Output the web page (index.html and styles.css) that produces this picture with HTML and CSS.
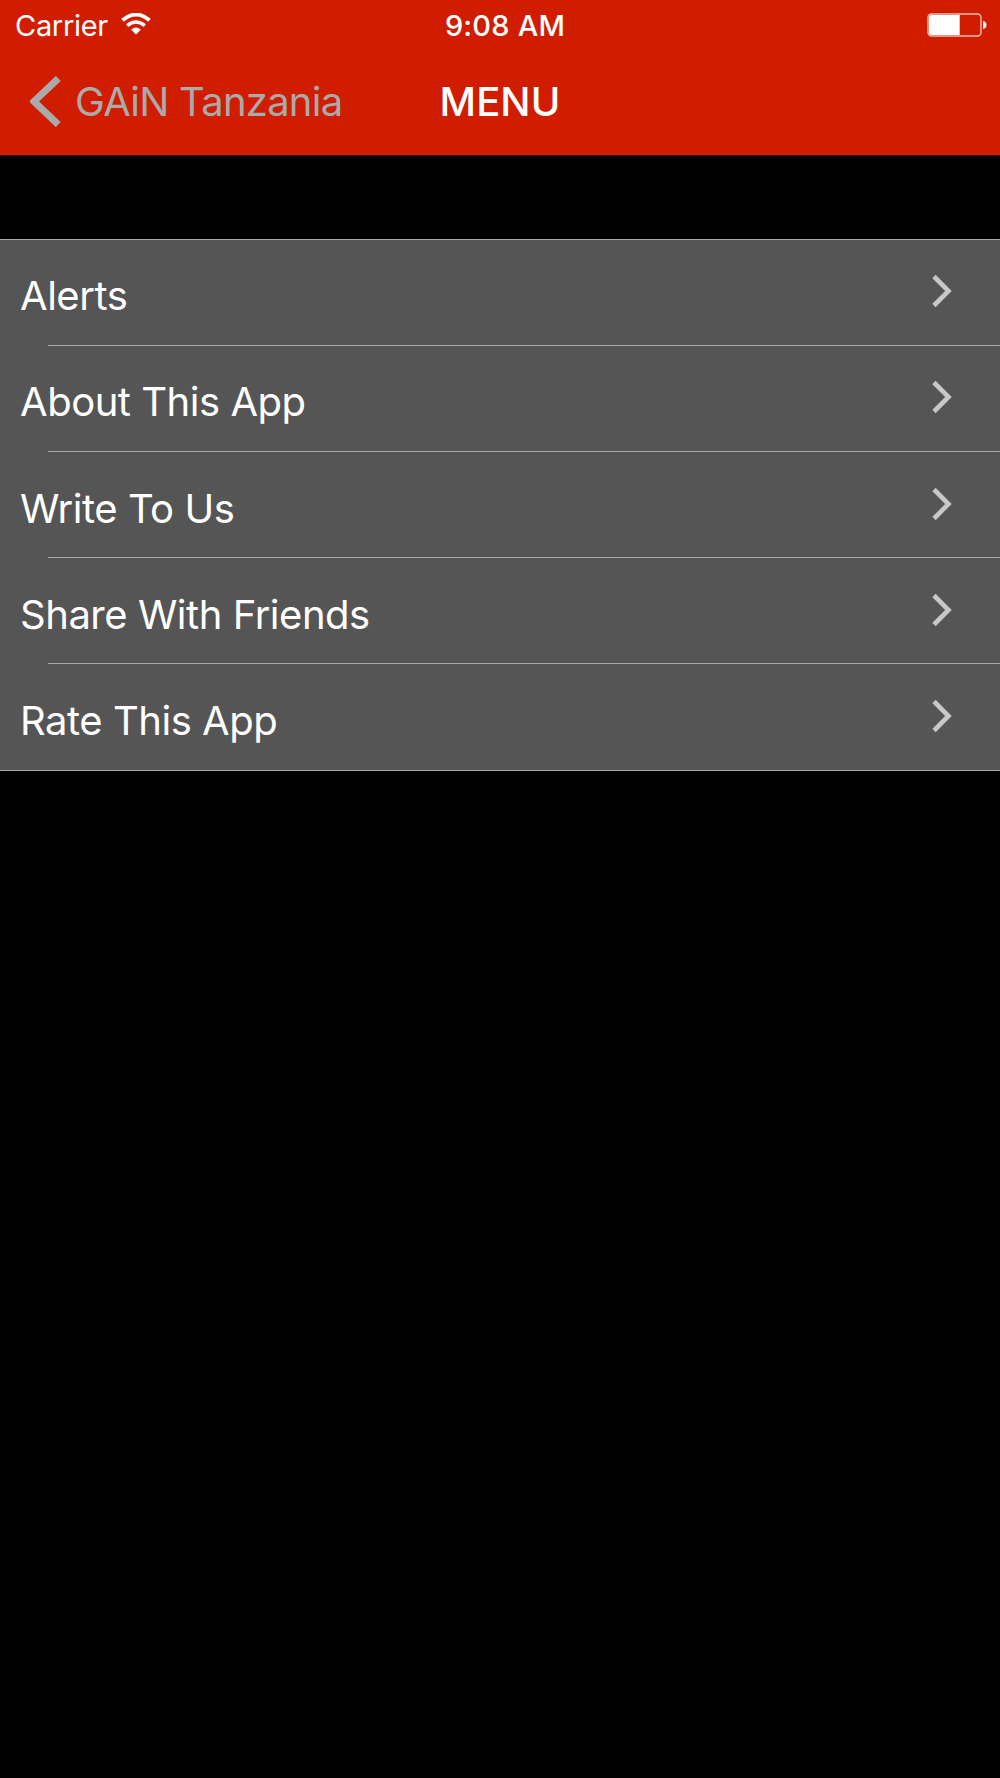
FILE: index.html
```html
<!DOCTYPE html>
<html lang="en">
<head>
<meta charset="utf-8">
<title>Menu</title>
<link rel="stylesheet" href="styles.css">
</head>
<body>
<header class="header">
  <div class="status">
    <div class="status-left">
      <span class="carrier">Carrier</span>
      <svg class="wifi" width="30" height="22" viewBox="0 0 30 22">
        <path d="M1.5 7.3Q15-4.3 28.500 7.300" fill="none" stroke="#fff" stroke-width="3.800"/>
        <path d="M6.200 12.700Q15 5.300 23.800 12.700" fill="none" stroke="#fff" stroke-width="3.500"/>
        <path d="M10.200 16.800Q15 12.200 19.800 16.800L15 21.600Z" fill="#fff"/>
      </svg>
    </div>
    <span class="time">9:08 AM</span>
    <svg class="battery" width="60" height="24" viewBox="0 0 60 24">
      <rect x="1" y="1" width="53" height="22" rx="3.500" fill="none" stroke="#fff" stroke-opacity=".7" stroke-width="1.400"/>
      <path d="M4.500 2H32.700V22H4.500Q2 22 2 19.500V4.500Q2 2 4.500 2Z" fill="#fff"/>
      <path d="M56 8Q59.500 8.800 59.500 12T56 16Z" fill="#fff"/>
    </svg>
  </div>
  <nav class="navbar">
    <a class="back">
      <svg class="back-icon" width="31" height="51" viewBox="0 0 31 51">
        <path d="M28.300 2.400L4 25.500L28.300 48.600" fill="none" stroke="#aaa" stroke-width="7"/>
      </svg>
      <span class="back-label">GAiN Tanzania</span>
    </a>
    <h1 class="title">MENU</h1>
  </nav>
</header>
<main class="menu">
  <a class="row"><span class="label">Alerts</span><svg class="chevron" width="20" height="34" viewBox="0 0 20 34"><path d="M2 2.500L16.500 17L2 31.500" /></svg></a>
  <a class="row"><span class="label">About This App</span><svg class="chevron" width="20" height="34" viewBox="0 0 20 34"><path d="M2 2.500L16.500 17L2 31.500" /></svg></a>
  <a class="row"><span class="label">Write To Us</span><svg class="chevron" width="20" height="34" viewBox="0 0 20 34"><path d="M2 2.500L16.500 17L2 31.500" /></svg></a>
  <a class="row"><span class="label">Share With Friends</span><svg class="chevron" width="20" height="34" viewBox="0 0 20 34"><path d="M2 2.500L16.500 17L2 31.500" /></svg></a>
  <a class="row"><span class="label">Rate This App</span><svg class="chevron" width="20" height="34" viewBox="0 0 20 34"><path d="M2 2.500L16.500 17L2 31.500" /></svg></a>
</main>
</body>
</html>
```
FILE: styles.css
```css
* { box-sizing: border-box; }
body {
  margin: 0;
  min-height: 1778px;
  background: #000;
  color: #fff;
  font-family: Inter, "Liberation Sans", sans-serif;
}
svg { display: block; flex: none; }
.header { height: 156px; background: #d01d00; border-bottom: 1px solid #2a0600; }
.status {
  display: grid;
  grid-template-columns: 1fr auto 1fr;
  height: 50px;
  padding: 0 13px 0 15px;
  font-size: 29px;
  line-height: 52px;
  white-space: nowrap;
}
.status-left { display: flex; }
.carrier { width: 105px; letter-spacing: -0.3px; }
.wifi { margin: 13px 0 0 1px; }
.time { font-weight: 500; padding-left: 8px; letter-spacing: 0.2px; }
.battery { justify-self: end; margin-top: 13px; }
.navbar {
  display: grid;
  grid-template-columns: 1fr auto 1fr;
  align-items: start;
  height: 104px;
  line-height: 104px;
  white-space: nowrap;
}
.back { display: flex; padding-left: 30px; color: #aaa; font-size: 40px; }
.back-icon { margin-top: 26px; }
.back-label { margin-left: 14px; letter-spacing: -0.75px; }
.title { margin: 0; font-size: 40px; font-weight: 500; letter-spacing: 0.1px; }
.menu {
  margin-top: 83px;
  height: 532px;
  background: #555;
  border-top: 1px solid #aaa;
  border-bottom: 1px solid #aaa;
}
.row {
  display: flex;
  justify-content: space-between;
  height: 106px;
  padding: 0 48px 0 20px;
  background: linear-gradient(#aaa, #aaa) 48px 100% / 1000px 1px no-repeat;
}
.row:nth-child(n+3) { padding-top: 1px; }
.row:last-child { background: none; }
.label { font-size: 40px; line-height: 111px; white-space: nowrap; letter-spacing: -0.47px; }
.chevron { margin-top: 34px; fill: none; stroke: #c7c7cc; stroke-width: 4.600; }
```
